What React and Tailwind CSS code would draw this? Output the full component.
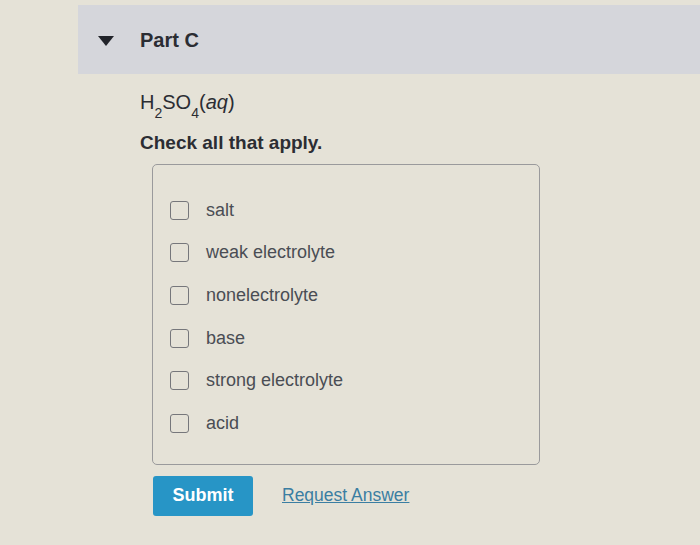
import React from 'react';

const options = ['salt', 'weak electrolyte', 'nonelectrolyte', 'base', 'strong electrolyte', 'acid'];

export default function App() {
  return (
    <div className="min-h-[545px] w-[700px] bg-[#e5e2d7] pt-[5px] font-['Liberation_Sans',Arial,sans-serif] text-[#2b2d33]">

      {/* Part header */}
      <div className="ml-[78px] h-[69px] bg-[#d5d6db] flex items-center">
        <svg width="16" height="10" viewBox="0 0 16 10" className="ml-[20px] mt-[2px]">
          <path d="M0 0 H16 L8 10 Z" fill="#22242a" />
        </svg>
        <h2 className="ml-[26px] text-[20px] font-bold leading-none">Part C</h2>
      </div>

      <div className="pl-[140px]">
        <p className="mt-[16px] text-[20px] leading-[24px]">
          H<sub className="text-[14px] align-[-5px]">2</sub>SO<sub className="text-[14px] align-[-5px]">4</sub>(<i>aq</i>)
        </p>
        <p className="mt-[18px] text-[19px] font-bold leading-[22px]">Check all that apply.</p>

        {/* Options box */}
        <div className="ml-[12px] mt-[10px] w-[388px] rounded-[5px] border border-[#9a9a9c] pt-[24px] pb-[19px] pl-[17px]">
          {options.map(o => (
            <label key={o} className="flex items-center h-[42.6px] gap-[17px] text-[18px] text-[#4a4d54]">
              <span className="w-[19px] h-[19px] rounded-[3px] border-[1.5px] border-[#76777b]"></span>
              {o}
            </label>
          ))}
        </div>

        {/* Actions */}
        <div className="ml-[13px] mt-[11px] flex items-center gap-[29px]">
          <button className="w-[100px] h-[40px] rounded-[3px] bg-[#2795c6] text-white text-[18px] font-bold">Submit</button>
          <a href="#" className="text-[17.5px] text-[#3b7ea2] underline">Request Answer</a>
        </div>
      </div>
    </div>
  );
}
